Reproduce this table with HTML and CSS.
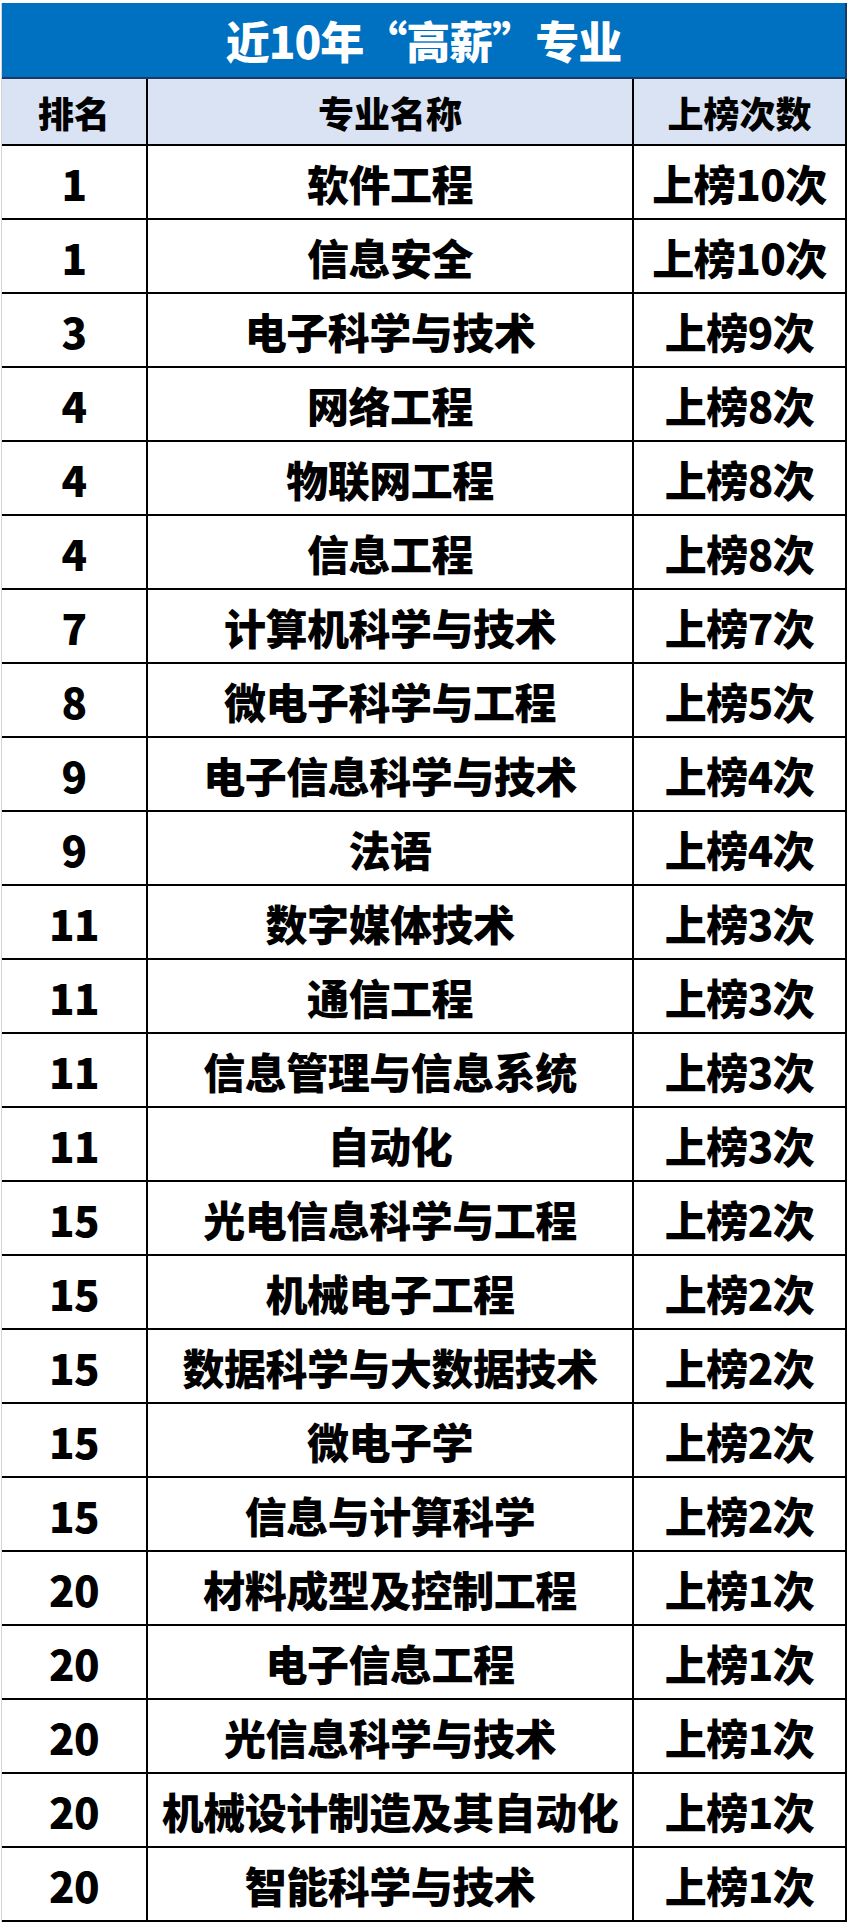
FILE: index.html
```html
<!DOCTYPE html>
<html lang="zh-CN">
<head>
<meta charset="utf-8">
<title>近10年“高薪”专业</title>
<link rel="stylesheet" href="styles.css">
</head>
<body>
<div class="sheet">
  <div class="title">近10年“高薪”专业</div>
  <div class="row head">
    <div class="cell c1">排名</div>
    <div class="cell c2">专业名称</div>
    <div class="cell c3">上榜次数</div>
  </div>
  <div class="row"><div class="cell c1">1</div><div class="cell c2">软件工程</div><div class="cell c3">上榜10次</div></div>
  <div class="row"><div class="cell c1">1</div><div class="cell c2">信息安全</div><div class="cell c3">上榜10次</div></div>
  <div class="row"><div class="cell c1">3</div><div class="cell c2">电子科学与技术</div><div class="cell c3">上榜9次</div></div>
  <div class="row"><div class="cell c1">4</div><div class="cell c2">网络工程</div><div class="cell c3">上榜8次</div></div>
  <div class="row"><div class="cell c1">4</div><div class="cell c2">物联网工程</div><div class="cell c3">上榜8次</div></div>
  <div class="row"><div class="cell c1">4</div><div class="cell c2">信息工程</div><div class="cell c3">上榜8次</div></div>
  <div class="row"><div class="cell c1">7</div><div class="cell c2">计算机科学与技术</div><div class="cell c3">上榜7次</div></div>
  <div class="row"><div class="cell c1">8</div><div class="cell c2">微电子科学与工程</div><div class="cell c3">上榜5次</div></div>
  <div class="row"><div class="cell c1">9</div><div class="cell c2">电子信息科学与技术</div><div class="cell c3">上榜4次</div></div>
  <div class="row"><div class="cell c1">9</div><div class="cell c2">法语</div><div class="cell c3">上榜4次</div></div>
  <div class="row"><div class="cell c1">11</div><div class="cell c2">数字媒体技术</div><div class="cell c3">上榜3次</div></div>
  <div class="row"><div class="cell c1">11</div><div class="cell c2">通信工程</div><div class="cell c3">上榜3次</div></div>
  <div class="row"><div class="cell c1">11</div><div class="cell c2">信息管理与信息系统</div><div class="cell c3">上榜3次</div></div>
  <div class="row"><div class="cell c1">11</div><div class="cell c2">自动化</div><div class="cell c3">上榜3次</div></div>
  <div class="row"><div class="cell c1">15</div><div class="cell c2">光电信息科学与工程</div><div class="cell c3">上榜2次</div></div>
  <div class="row"><div class="cell c1">15</div><div class="cell c2">机械电子工程</div><div class="cell c3">上榜2次</div></div>
  <div class="row"><div class="cell c1">15</div><div class="cell c2">数据科学与大数据技术</div><div class="cell c3">上榜2次</div></div>
  <div class="row"><div class="cell c1">15</div><div class="cell c2">微电子学</div><div class="cell c3">上榜2次</div></div>
  <div class="row"><div class="cell c1">15</div><div class="cell c2">信息与计算科学</div><div class="cell c3">上榜2次</div></div>
  <div class="row"><div class="cell c1">20</div><div class="cell c2">材料成型及控制工程</div><div class="cell c3">上榜1次</div></div>
  <div class="row"><div class="cell c1">20</div><div class="cell c2">电子信息工程</div><div class="cell c3">上榜1次</div></div>
  <div class="row"><div class="cell c1">20</div><div class="cell c2">光信息科学与技术</div><div class="cell c3">上榜1次</div></div>
  <div class="row"><div class="cell c1">20</div><div class="cell c2">机械设计制造及其自动化</div><div class="cell c3">上榜1次</div></div>
  <div class="row"><div class="cell c1">20</div><div class="cell c2">智能科学与技术</div><div class="cell c3">上榜1次</div></div>
</div>
</body>
</html>
```
FILE: styles.css
```css
html, body {
  margin: 0;
  padding: 0;
  background: #ffffff;
}
body {
  font-family: "Noto Sans CJK SC", "Noto Sans", sans-serif;
  font-weight: 900;
  color: #000;
}
.sheet {
  width: 845px;
  margin: 3px 4px 4px 1px;
  border-left: 1px solid #d4d4d4;
  display: flex;
  flex-direction: column;
}
.title {
  height: 74px;
  background: #0070c0;
  color: #fff;
  font-size: 44px;
  line-height: 74px;
  text-align: center;
  border-bottom: 2px solid #1a3a66;
  border-right: 2px solid #1a3a66;
  letter-spacing: -1px;
}
.row {
  display: grid;
  grid-template-columns: 146px 486px 213px;
  height: 74px;
}
.row.head {
  height: 67px;
  background: #dae3f3;
  font-size: 36px;
}
.cell {
  display: flex;
  align-items: center;
  justify-content: center;
  border-right: 2px solid #000;
  border-bottom: 2px solid #000;
  font-size: 42px;
  white-space: nowrap;
  letter-spacing: -0.5px;
}
.head .cell {
  font-size: 36px;
  letter-spacing: 0;
}
```
